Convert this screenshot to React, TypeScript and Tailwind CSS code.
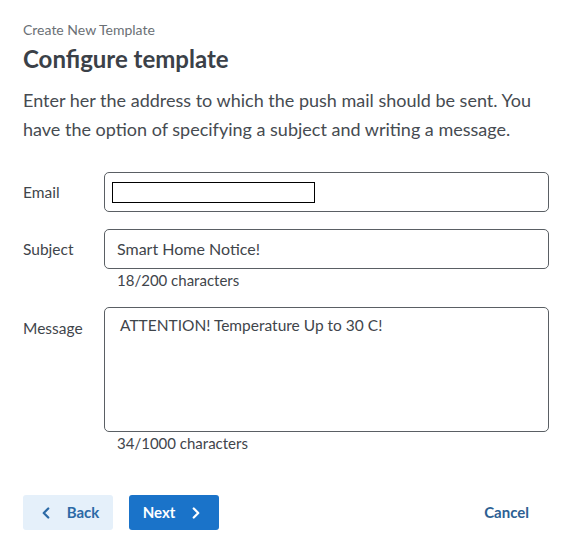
import { FiChevronLeft, FiChevronRight } from "react-icons/fi";

const App = () => {
  return (
    <div className="w-[569px] h-[550px] bg-white pl-[23px] pr-[20px] pt-[21px] font-['Lato','Noto_Sans',sans-serif] text-[#3f454b]">
      <p className="text-[14px] text-[#6b7075] leading-[18px]">Create New Template</p>
      <h1 className="text-[24px] font-bold text-[#3b4148] leading-[30px] mt-[5px]">Configure template</h1>
      <p className="text-[18px] leading-[29px] mt-[12px] text-[#464b51]">
        Enter her the address to which the push mail should be sent. You have the option of specifying a subject and writing a message.
      </p>

      <div className="mt-[28px] flex flex-col">
        <div className="flex items-start">
          <label className="w-[81px] text-[15.5px] pt-[9px]">Email</label>
          <div className="flex-1 h-[40px] border border-[#5a5f64] rounded-[5px] flex items-center pl-[7px]">
            <div className="w-[203px] h-[21px] border border-black" />
          </div>
        </div>

        <div className="flex items-start mt-[17px]">
          <label className="w-[81px] text-[15.5px] pt-[9px]">Subject</label>
          <div className="flex-1">
            <div className="h-[40px] border border-[#5a5f64] rounded-[5px] flex items-center px-[12px] text-[16px]">
              Smart Home Notice!
            </div>
            <p className="text-[15px] pl-[13px] mt-[1px] leading-[20px]">18/200 characters</p>
          </div>
        </div>

        <div className="flex items-start mt-[17px]">
          <label className="w-[81px] text-[15.5px] pt-[10px]">Message</label>
          <div className="flex-1">
            <div className="h-[125px] border border-[#5a5f64] rounded-[5px] px-[15px] pt-[6px] text-[15.5px]">
              ATTENTION! Temperature Up to 30 C!
            </div>
            <p className="text-[15px] pl-[13px] mt-[1px] leading-[20px]">34/1000 characters</p>
          </div>
        </div>
      </div>

      <div className="flex items-center mt-[42px] pr-[20px]">
        <button className="w-[90px] h-[35px] rounded-[3px] bg-[#e5f0fa] text-[#2c6aa6] font-bold text-[15px] flex items-center justify-center gap-[12px]">
          <FiChevronLeft size={18} strokeWidth={3} />
          Back
        </button>
        <button className="ml-[16px] w-[90px] h-[35px] rounded-[3px] bg-[#1a73c9] text-white font-bold text-[15px] flex items-center justify-center gap-[12px]">
          Next
          <FiChevronRight size={18} strokeWidth={3} />
        </button>
        <button className="ml-auto text-[#2d5f93] font-bold text-[15px]">Cancel</button>
      </div>
    </div>
  );
};

export default App;
